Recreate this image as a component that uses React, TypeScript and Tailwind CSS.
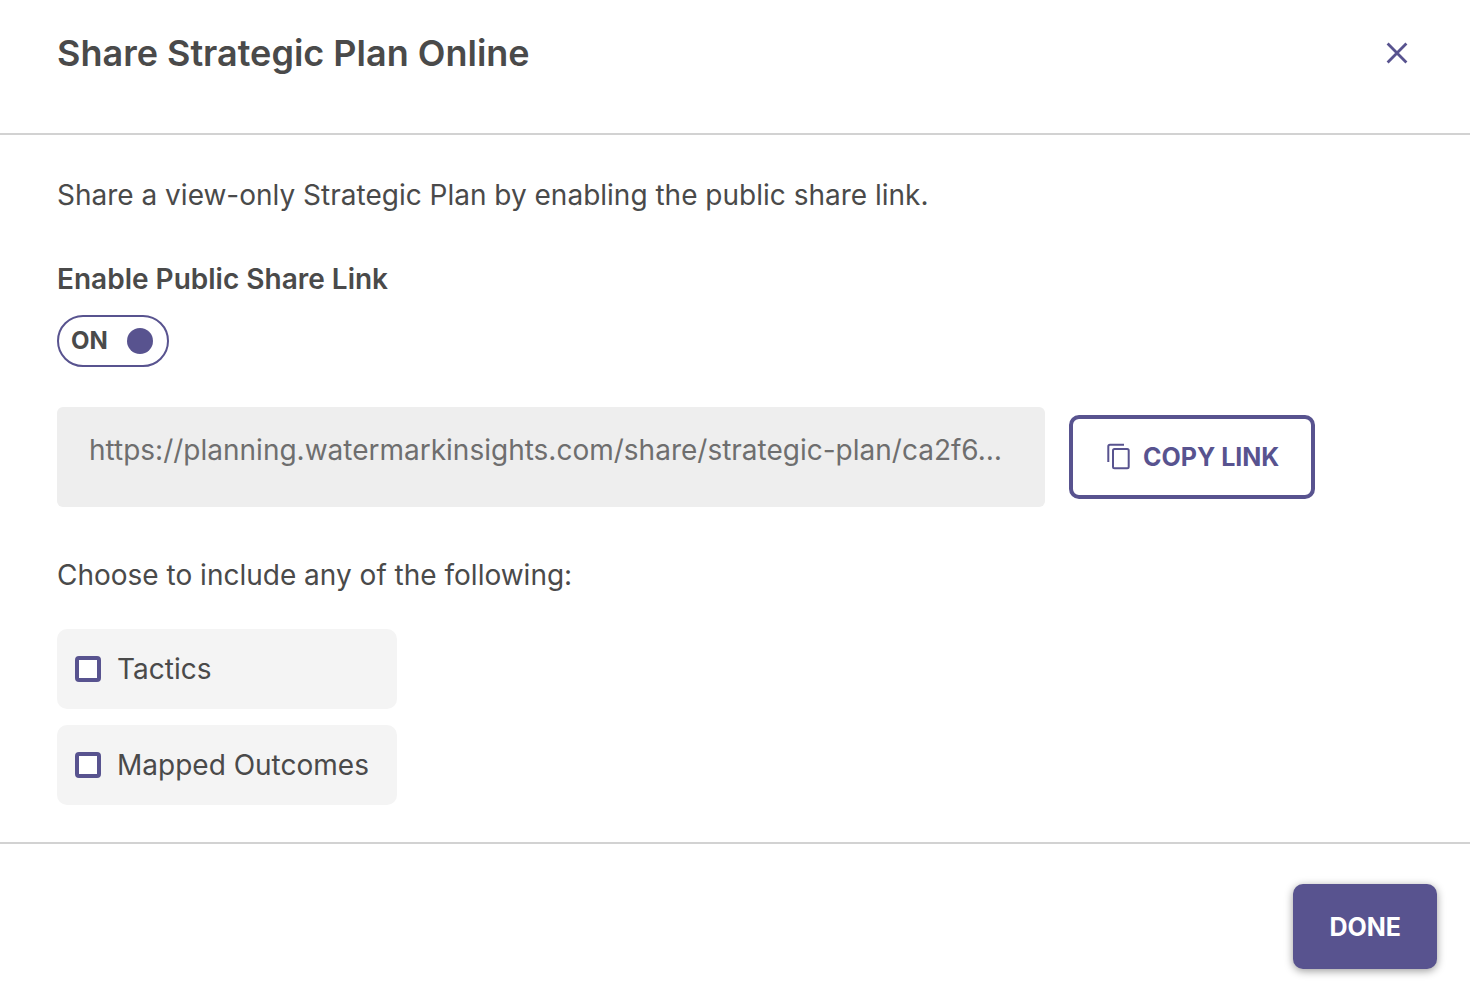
import { useState } from 'react';

/* ───────── Data ───────── */

const shareUrl = 'https://planning.watermarkinsights.com/share/strategic-plan/ca2f6…';

const includeOptions = [
  { id: 'tactics', label: 'Tactics' },
  { id: 'mapped-outcomes', label: 'Mapped Outcomes' },
];

/* ───────── Icons ───────── */

function CloseIcon() {
  return (
    <svg viewBox="0 0 24 24" className="size-6" fill="none" stroke="currentColor" strokeWidth="2.8" aria-hidden="true">
      <path d="M2.6 2.6l18.8 18.8M21.4 2.6L2.6 21.4" />
    </svg>
  );
}

function CopyIcon() {
  return (
    <svg viewBox="0 0 28 28" className="size-7" fill="none" stroke="currentColor" strokeWidth="2" aria-hidden="true">
      <rect x="8" y="6" width="15.7" height="19.3" rx="1.5" />
      <path d="M19 1.7H5a1.7 1.7 0 0 0-1.7 1.7V19" />
    </svg>
  );
}

/* ───────── Component ───────── */

export default function App() {
  const [enabled, setEnabled] = useState(true);
  const [included, setIncluded] = useState<string[]>([]);

  const toggleOption = (id: string) => {
    setIncluded((prev) => (prev.includes(id) ? prev.filter((item) => item !== id) : [...prev, id]));
  };

  return (
    <main className="flex min-h-screen flex-col bg-white font-['Inter',sans-serif] text-[28px] leading-10 text-[#4a4a4a]">
      {/* ─── Header ─── */}
      <header className="flex items-start justify-between border-b-2 border-[#d2d2d2] pt-[29px] pr-[49px] pb-14 pl-[57px]">
        <h1 className="text-4xl leading-12 font-semibold">Share Strategic Plan Online</h1>
        <button type="button" aria-label="Close" className="flex size-12 items-center justify-center text-[#58538f]">
          <CloseIcon />
        </button>
      </header>

      {/* ─── Body ─── */}
      <section className="grow border-b-2 border-[#d2d2d2] px-[57px] pt-10 pb-9">
        <p>Share a view-only Strategic Plan by enabling the public share link.</p>

        <h2 id="share-label" className="mt-11 font-semibold">Enable Public Share Link</h2>
        <button
          type="button"
          role="switch"
          aria-checked={enabled}
          aria-labelledby="share-label"
          onClick={() => setEnabled(!enabled)}
          className="mt-4 flex h-13 w-28 items-center justify-between rounded-full border-2 border-[#58538f] pr-3.5 pl-3 text-2xl font-bold"
        >
          {enabled ? 'ON' : 'OFF'}
          <span className="size-[26px] rounded-full bg-[#58538f]" />
        </button>

        <div className="mt-10 flex items-center gap-6">
          <input
            type="text"
            readOnly
            aria-label="Public share link"
            value={shareUrl}
            className="h-25 w-[988px] min-w-0 rounded-md bg-[#eeeeee] px-8 pb-3.5 text-[#6e6e6e] outline-none"
          />
          <button
            type="button"
            className="flex h-21 shrink-0 items-center gap-2.5 rounded-[10px] border-4 border-[#58538f] px-8 text-[25px] font-bold text-[#58538f]"
          >
            <CopyIcon />
            COPY LINK
          </button>
        </div>

        <fieldset className="mt-12">
          <legend>Choose to include any of the following:</legend>
          <div className="mt-[34px] flex w-85 flex-col gap-4">
            {includeOptions.map((option) => (
              <label key={option.id} className="flex h-20 items-center gap-4 rounded-[10px] bg-[#f4f4f4] px-[18px]">
                <input
                  type="checkbox"
                  checked={included.includes(option.id)}
                  onChange={() => toggleOption(option.id)}
                  className="size-[26px] appearance-none rounded-sm border-4 border-[#58538f] bg-white checked:bg-[#58538f]"
                />
                {option.label}
              </label>
            ))}
          </div>
        </fieldset>
      </section>

      {/* ─── Footer ─── */}
      <footer className="flex justify-end px-[33px] pt-10 pb-[29px]">
        <button
          type="button"
          className="h-[85px] rounded-[10px] bg-[#58538f] px-9 text-[25px] font-bold text-white shadow-[0_2px_8px_rgba(0,0,0,0.4)]"
        >
          DONE
        </button>
      </footer>
    </main>
  );
}
